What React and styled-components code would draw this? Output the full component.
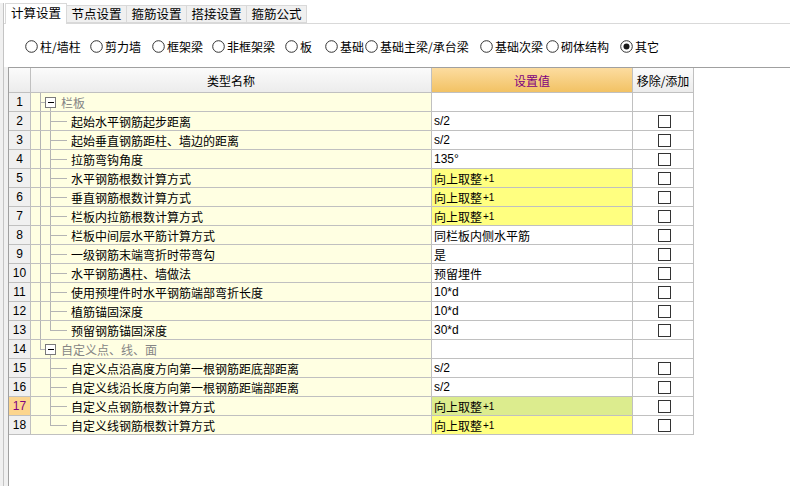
import React from 'react';
import styled, { createGlobalStyle } from 'styled-components';

const GlobalStyle = createGlobalStyle`
  html, body {
    margin: 0;
    padding: 0;
    background: #ffffff;
  }
  body {
    font-family: "Liberation Sans", "Noto Sans CJK SC", sans-serif;
    font-size: 12px;
    color: #000;
  }
`;

const tabs = ['计算设置', '节点设置', '箍筋设置', '搭接设置', '箍筋公式'];

const radios = [
  { label: '柱/墙柱', width: 65 },
  { label: '剪力墙', width: 62 },
  { label: '框架梁', width: 60 },
  { label: '非框架梁', width: 73 },
  { label: '板', width: 40 },
  { label: '基础', width: 40 },
  { label: '基础主梁/承台梁', width: 115 },
  { label: '基础次梁', width: 66 },
  { label: '砌体结构', width: 74 },
  { label: '其它', width: 60, checked: true },
];

const ROUND = '向上取整+1';

// tree: outer / inner = 'full' | 'top' | 'bottom' | 'none'
const rows = [
  { label: '栏板', group: true, outer: 'full', inner: 'bottom' },
  { label: '起始水平钢筋起步距离', value: 's/2', outer: 'full', inner: 'full' },
  { label: '起始垂直钢筋距柱、墙边的距离', value: 's/2', outer: 'full', inner: 'full' },
  { label: '拉筋弯钩角度', value: '135°', outer: 'full', inner: 'full' },
  { label: '水平钢筋根数计算方式', value: ROUND, tone: 'yellow', outer: 'full', inner: 'full' },
  { label: '垂直钢筋根数计算方式', value: ROUND, tone: 'yellow', outer: 'full', inner: 'full' },
  { label: '栏板内拉筋根数计算方式', value: ROUND, tone: 'yellow', outer: 'full', inner: 'full' },
  { label: '栏板中间层水平筋计算方式', value: '同栏板内侧水平筋', outer: 'full', inner: 'full' },
  { label: '一级钢筋末端弯折时带弯勾', value: '是', outer: 'full', inner: 'full' },
  { label: '水平钢筋遇柱、墙做法', value: '预留埋件', outer: 'full', inner: 'full' },
  { label: '使用预埋件时水平钢筋端部弯折长度', value: '10*d', outer: 'full', inner: 'full' },
  { label: '植筋锚固深度', value: '10*d', outer: 'full', inner: 'full' },
  { label: '预留钢筋锚固深度', value: '30*d', outer: 'full', inner: 'top' },
  { label: '自定义点、线、面', group: true, outer: 'top', inner: 'bottom' },
  { label: '自定义点沿高度方向第一根钢筋距底部距离', value: 's/2', outer: 'none', inner: 'full' },
  { label: '自定义线沿长度方向第一根钢筋距端部距离', value: 's/2', outer: 'none', inner: 'full' },
  { label: '自定义点钢筋根数计算方式', value: ROUND, tone: 'selected', outer: 'none', inner: 'full', selected: true },
  { label: '自定义线钢筋根数计算方式', value: ROUND, tone: 'yellow', outer: 'none', inner: 'top' },
];

const valueColors = {
  yellow: '#ffff80',
  selected: '#dcec8e',
};

const TreeGuide = ({ outer, inner, group }) => {
  const w = group ? 28 : 40;
  const vSpan = (mode, top) => {
    if (mode === 'full') return [0, 18];
    if (mode === 'top') return [0, 9.5];
    if (mode === 'bottom') return [top, 18];
    return null;
  };
  const o = vSpan(outer, 9.5);
  const i = vSpan(inner, 14);
  return (
    <svg width={w} height="18" viewBox={`0 0 ${w} 18`} style={{ flex: 'none' }}>
      <g stroke="#b4b4b4" strokeWidth="1" fill="none" shapeRendering="crispEdges">
        {o && <line x1="9.5" y1={o[0]} x2="9.5" y2={o[1]} />}
        {i && <line x1="19.5" y1={i[0]} x2="19.5" y2={i[1]} />}
        {group && <line x1="9.5" y1="9.5" x2="14" y2="9.5" />}
        {!group && <line x1="19.5" y1="9.5" x2="36" y2="9.5" />}
      </g>
      {group && (
        <g shapeRendering="crispEdges">
          <rect x="14.5" y="4.5" width="10" height="10" fill="#fff" stroke="#7a7a7a" />
          <line x1="16.5" y1="9.5" x2="23" y2="9.5" stroke="#000" />
        </g>
      )}
    </svg>
  );
};

const RadioMark = ({ checked }) => (
  <svg width="13" height="13" viewBox="0 0 13 13" style={{ flex: 'none' }}>
    <circle cx="6.5" cy="6.5" r="5.8" fill="#fff" stroke="#333" strokeWidth="1" />
    {checked && <circle cx="6.5" cy="6.5" r="3" fill="#1a1a1a" />}
  </svg>
);

const Value = ({ text }) => {
  if (!text) return null;
  const m = text.match(/^(.*?)(\+1)$/);
  if (!m) return text;
  return (
    <>
      {m[1]}
      <Suffix>{m[2]}</Suffix>
    </>
  );
};

export default function App() {
  return (
    <>
      <GlobalStyle />
      <Page>
        <LeftEdge />
        <Main>
          <TabBar>
            {tabs.map((t, i) => (
              <Tab key={t} active={i === 0}>{t}</Tab>
            ))}
          </TabBar>
          <RadioBar>
            {radios.map((r) => (
              <RadioItem key={r.label} width={r.width}>
                <RadioMark checked={r.checked} />
                <RadioLabel>{r.label}</RadioLabel>
              </RadioItem>
            ))}
          </RadioBar>
          <GridArea>
            <Gutter />
            <GridBox>
              <Table>
                <HeadCell kind="gray" />
                <HeadCell kind="gray">类型名称</HeadCell>
                <HeadCell kind="orange">设置值</HeadCell>
                <HeadCell kind="gray">移除/添加</HeadCell>
                {rows.map((r, idx) => (
                  <React.Fragment key={idx}>
                    <NumCell selected={r.selected}>{idx + 1}</NumCell>
                    <NameCell>
                      <TreeGuide outer={r.outer} inner={r.inner} group={r.group} />
                      <NameText group={r.group}>{r.label}</NameText>
                    </NameCell>
                    <ValueCell tone={r.tone}>
                      <Value text={r.value} />
                    </ValueCell>
                    <CheckCell>{!r.group && <CheckBox />}</CheckCell>
                  </React.Fragment>
                ))}
              </Table>
            </GridBox>
          </GridArea>
        </Main>
      </Page>
    </>
  );
}

const Page = styled.div`
  display: flex;
  height: 486px;
  width: 790px;
  overflow: hidden;
`;

const LeftEdge = styled.div`
  width: 3px;
  margin-top: 3px;
  background: #f0f0f0;
  border-right: 1px solid #c4c4c4;
`;

const Main = styled.div`
  flex: 1;
  display: flex;
  flex-direction: column;
  min-width: 0;
`;

const TabBar = styled.div`
  height: 24px;
  box-sizing: border-box;
  display: flex;
  align-items: flex-end;
  padding-left: 1px;
  border-bottom: 1px solid #d9d9d9;
`;

const Tab = styled.div`
  box-sizing: border-box;
  width: ${(p) => (p.active ? 62 : 60)}px;
  height: ${(p) => (p.active ? 21 : 18)}px;
  margin-bottom: ${(p) => (p.active ? -1 : 0)}px;
  background: ${(p) => (p.active ? '#ffffff' : '#f0f0f0')};
  border: 1px solid #d9d9d9;
  border-bottom: ${(p) => (p.active ? 'none' : '1px solid #d9d9d9')};
  border-left: ${(p) => (p.active ? '1px solid #d9d9d9' : 'none')};
  display: flex;
  align-items: center;
  justify-content: center;
  font-family: "Noto Sans CJK SC", sans-serif;
  font-size: 12.5px;
  line-height: 1;
  padding-bottom: ${(p) => (p.active ? 2 : 0)}px;
  position: relative;
`;

const RadioBar = styled.div`
  height: 43px;
  display: flex;
  align-items: center;
  padding-left: 21px;
  padding-top: 1px;
  box-sizing: border-box;
`;

const RadioItem = styled.div`
  width: ${(p) => p.width}px;
  flex: none;
  display: flex;
  align-items: center;
  gap: 2px;
`;

const RadioLabel = styled.span`
  font-family: "Noto Sans CJK SC", sans-serif;
  font-size: 12px;
  white-space: nowrap;
`;

const GridArea = styled.div`
  flex: 1;
  display: flex;
  min-height: 0;
`;

const Gutter = styled.div`
  width: 4px;
  background: #f0f0f0;
`;

const GridBox = styled.div`
  flex: 1;
  background: #fff;
  border-top: 1px solid #a0a0a0;
  border-left: 1px solid #a0a0a0;
`;

const Table = styled.div`
  display: grid;
  grid-template-columns: 22px 401px 201px 61px;
  grid-template-rows: 25px;
  grid-auto-rows: 19px;
`;

const Cell = styled.div`
  box-sizing: border-box;
  border-right: 1px solid #c0c0c0;
  border-bottom: 1px solid #c0c0c0;
  display: flex;
  align-items: center;
  white-space: nowrap;
  overflow: hidden;
`;

const HeadCell = styled(Cell)`
  justify-content: center;
  font-family: "Noto Sans CJK SC", sans-serif;
  font-size: 12px;
  color: ${(p) => (p.kind === 'orange' ? '#800080' : '#000')};
  background: ${(p) =>
    p.kind === 'orange'
      ? 'linear-gradient(#fcdca0, #f2c264)'
      : 'linear-gradient(#fbfbfb, #ececec)'};
`;

const NumCell = styled(Cell)`
  justify-content: center;
  background: ${(p) => (p.selected ? '#fcd58e' : '#f0f0f0')};
  color: ${(p) => (p.selected ? '#800080' : '#000')};
  font-size: 12px;
`;

const NameCell = styled(Cell)`
  background: #ffffe2;
  padding-left: 0;
`;

const NameText = styled.span`
  font-family: "Noto Sans CJK SC", sans-serif;
  font-size: 12px;
  color: ${(p) => (p.group ? '#858585' : '#000')};
  margin-left: ${(p) => (p.group ? 2 : 0)}px;
`;

const ValueCell = styled(Cell)`
  background: ${(p) => valueColors[p.tone] || '#ffffff'};
  padding-left: 2px;
  font-family: "Liberation Sans", "Noto Sans CJK SC", sans-serif;
  font-size: 12px;
`;

const Suffix = styled.span`
  font-size: 10px;
  margin-left: 1px;
`;

const CheckCell = styled(Cell)`
  justify-content: center;
  background: #fff;
  padding-left: 2px;
`;

const CheckBox = styled.div`
  width: 13px;
  height: 13px;
  box-sizing: border-box;
  border: 1px solid #333;
  background: #fff;
`;
